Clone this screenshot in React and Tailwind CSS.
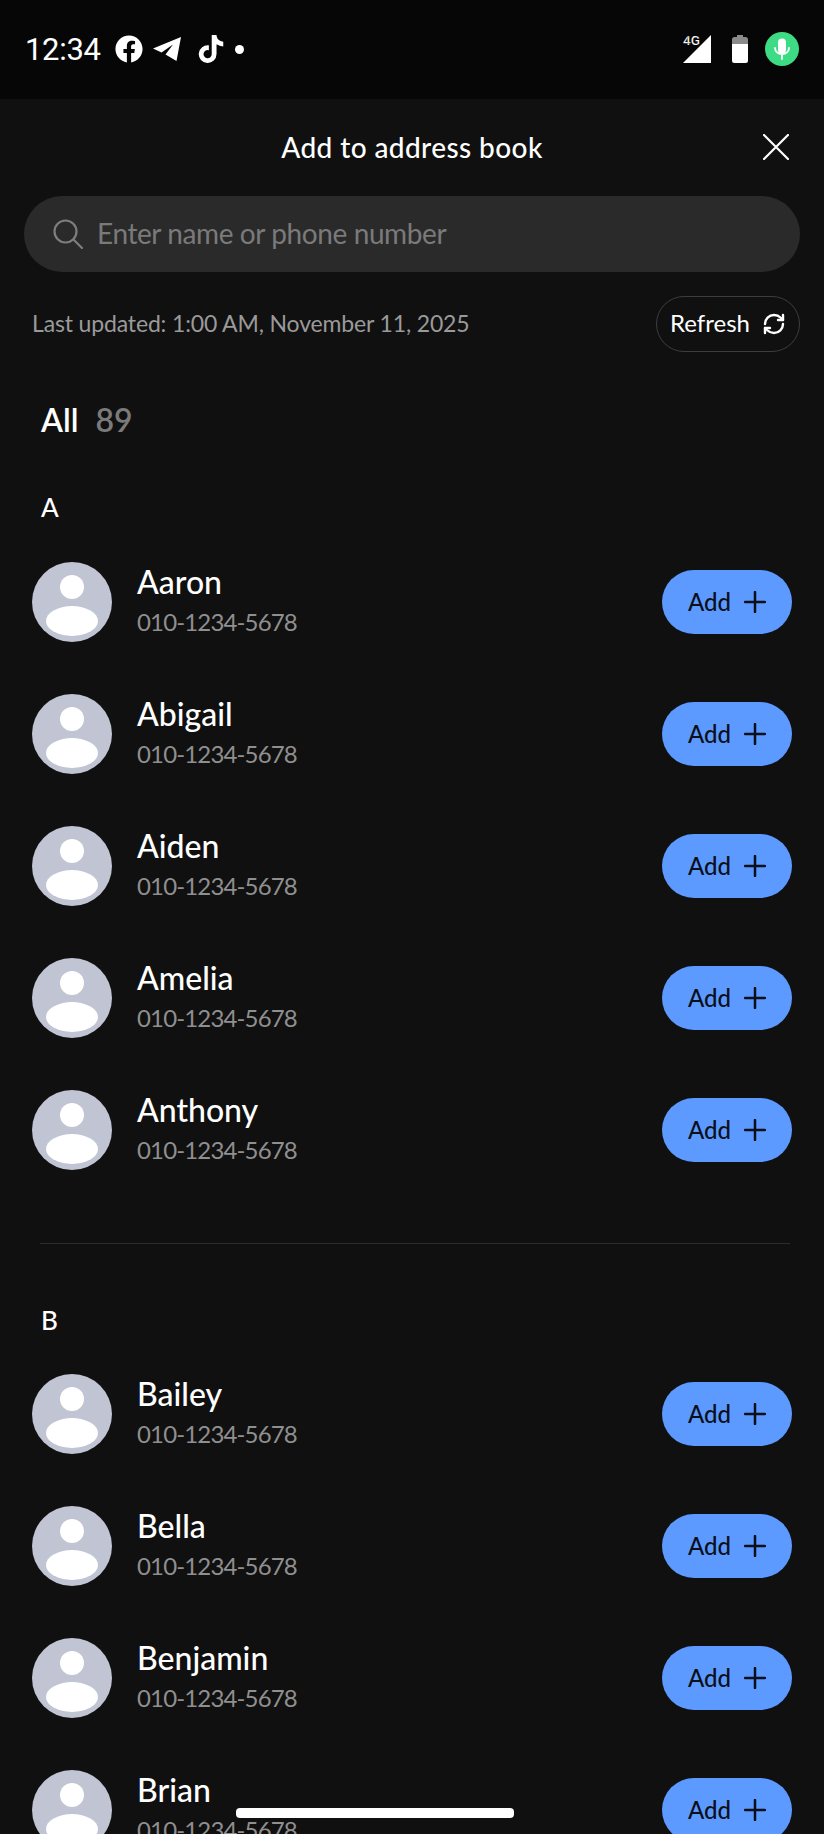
import React from 'react';
import { RefreshCw } from 'lucide-react';
import { FaFacebook, FaTiktok } from 'react-icons/fa';

const sectionA = ['Aaron', 'Abigail', 'Aiden', 'Amelia', 'Anthony'];
const sectionB = ['Bailey', 'Bella', 'Benjamin', 'Brian'];

const Avatar = () => (
  <svg width="80" height="80" viewBox="0 0 80 80" className="shrink-0">
    <circle cx="40" cy="40" r="40" fill="#c1c5d3" />
    <circle cx="40" cy="25" r="12" fill="#fff" />
    <ellipse cx="40" cy="59" rx="26" ry="15" fill="#fff" />
  </svg>
);

const PlusIcon = () => (
  <svg width="22" height="22" viewBox="0 0 22 22" fill="none" stroke="#0a0f1a" strokeWidth="2.5" strokeLinecap="round">
    <path d="M11 1v20M1 11h20" />
  </svg>
);

const ContactRow = ({ name }) => (
  <div className="flex items-center h-20 pl-8 pr-8">
    <Avatar />
    <div className="ml-[25px] flex-1 flex flex-col gap-2">
      <div className="text-[32px] leading-8 text-white font-medium">{name}</div>
      <div className="text-[24px] leading-8 text-[#8f8f8f] tracking-[-0.85px]">010-1234-5678</div>
    </div>
    <button className="h-16 w-[130px] rounded-full bg-[#5c9aff] flex items-center justify-center gap-[13px] text-[24px] font-medium text-[#0a0f1a]">
      Add
      <PlusIcon />
    </button>
  </div>
);

const App = () => {
  return (
    <div className="relative w-[824px] h-[1834px] overflow-hidden bg-[#101010] font-['Lato','Inter',sans-serif]">
      {/* Status bar */}
      <div className="h-[99px] bg-[#060606] flex items-center justify-between pl-[25px] pr-[25px] pb-[1px]">
        <div className="flex items-center text-white">
          <span className="text-[31px] leading-none w-[90px] tracking-[-0.3px] font-['Roboto',sans-serif]">12:34</span>
          <FaFacebook className="w-7 h-7" />
          <svg width="28" height="24" viewBox="0 0 28 24" fill="#fff" className="ml-[10px]">
            <path d="M0 11.500 28 0l-4.500 24-11-6.500L20 7.500 8.500 15.500z" strokeLinejoin="round" />
          </svg>
          <FaTiktok className="w-[26px] h-7 ml-[17px]" />
          <span className="w-[9px] h-[9px] rounded-full bg-white ml-[11px]" />
        </div>
        <div className="flex items-center">
          <svg width="28" height="28" viewBox="0 0 28 28" className="overflow-visible">
            <path d="M28 0v28H0z" fill="#fff" />
            <text x="0" y="10" fontSize="13.5" fontWeight="500" fill="#fff" stroke="#060606" strokeWidth="0.2" fontFamily="Roboto, sans-serif">4G</text>
          </svg>
          <svg width="16" height="28" viewBox="0 0 16 28" className="ml-[21px]">
            <path d="M5 0h6v2h2.500A2.500 2.500 0 0 1 16 4.500V9H0V4.500A2.500 2.500 0 0 1 2.500 2H5z" fill="#8a8a8a" />
            <path d="M0 9h16v16.500a2.500 2.500 0 0 1-2.500 2.500h-11A2.500 2.500 0 0 1 0 25.500z" fill="#fff" />
          </svg>
          <div className="ml-[17px] w-[34px] h-[34px] rounded-full bg-[#3ddc84] flex items-center justify-center">
            <svg width="18" height="22" viewBox="0 0 18 22" fill="none" stroke="#fff" strokeWidth="1.8" strokeLinecap="round">
              <rect x="5" y="0.5" width="8" height="15" rx="4" fill="#fff" stroke="none" />
              <path d="M2 10c0 3.500 3 6 7 6s7-2.500 7-6M9 16v5" />
            </svg>
          </div>
        </div>
      </div>

      {/* Header */}
      <div className="h-[97px] grid grid-cols-[1fr_auto_1fr] items-center pb-[1px]">
        <div />
        <h1 className="text-[28px] font-medium tracking-[0.4px] text-white">Add to address book</h1>
        <div className="flex justify-end pr-[35px]">
          <svg width="26" height="26" viewBox="0 0 26 26" fill="none" stroke="#fff" strokeWidth="2.2" strokeLinecap="round">
            <path d="M1 1l24 24M25 1L1 25" />
          </svg>
        </div>
      </div>

      {/* Search */}
      <div className="mx-6 h-[76px] rounded-full bg-[#2a2a2a] flex items-center pl-[29px]">
        <svg width="30" height="30" viewBox="0 0 30 30" fill="none" stroke="#7e7e7e" strokeWidth="2.2" strokeLinecap="round">
          <circle cx="12.5" cy="12.5" r="11" />
          <path d="M20.5 20.5l8.5 8.5" />
        </svg>
        <span className="ml-[14px] text-[28px] leading-none tracking-[-0.4px] pb-[2px] text-[#7a7a7a]">Enter name or phone number</span>
      </div>

      {/* Last updated */}
      <div className="mt-6 flex items-center justify-between pl-8 pr-6">
        <span className="text-[23px] tracking-[-0.15px] pb-[2px] text-[#9a9a9a]">Last updated: 1:00 AM, November 11, 2025</span>
        <button className="h-14 w-36 rounded-full border border-[#3d3d3d] flex items-center justify-center gap-[12px] text-[24px] text-white">
          <span className="pb-[2px]">Refresh</span>
          <RefreshCw className="w-6 h-6" strokeWidth={2.4} />
        </button>
      </div>

      {/* All count */}
      <div className="mt-[48px] h-10 flex items-center pl-[41px] text-[32px] font-semibold">
        <span className="text-white">All</span>
        <span className="ml-[17px] text-[#7a7a7a]">89</span>
      </div>

      {/* Section A */}
      <div className="mt-[51px] h-8 pl-[41px] flex items-center text-[26px] font-medium text-white">A</div>
      <div className="mt-[39px] flex flex-col gap-[52px]">
        {sectionA.map((name) => (
          <ContactRow key={name} name={name} />
        ))}
      </div>

      <div className="mt-[73px] ml-10 mr-[34px] h-px bg-[#2c2c2c]" />

      {/* Section B */}
      <div className="mt-[60px] h-8 pl-[41px] flex items-center text-[26px] font-medium text-white">B</div>
      <div className="mt-[38px] flex flex-col gap-[52px]">
        {sectionB.map((name) => (
          <ContactRow key={name} name={name} />
        ))}
      </div>

      {/* Home indicator */}
      <div className="absolute left-[236px] top-[1808px] w-[278px] h-[10px] rounded bg-white" />
    </div>
  );
};

export default App;
